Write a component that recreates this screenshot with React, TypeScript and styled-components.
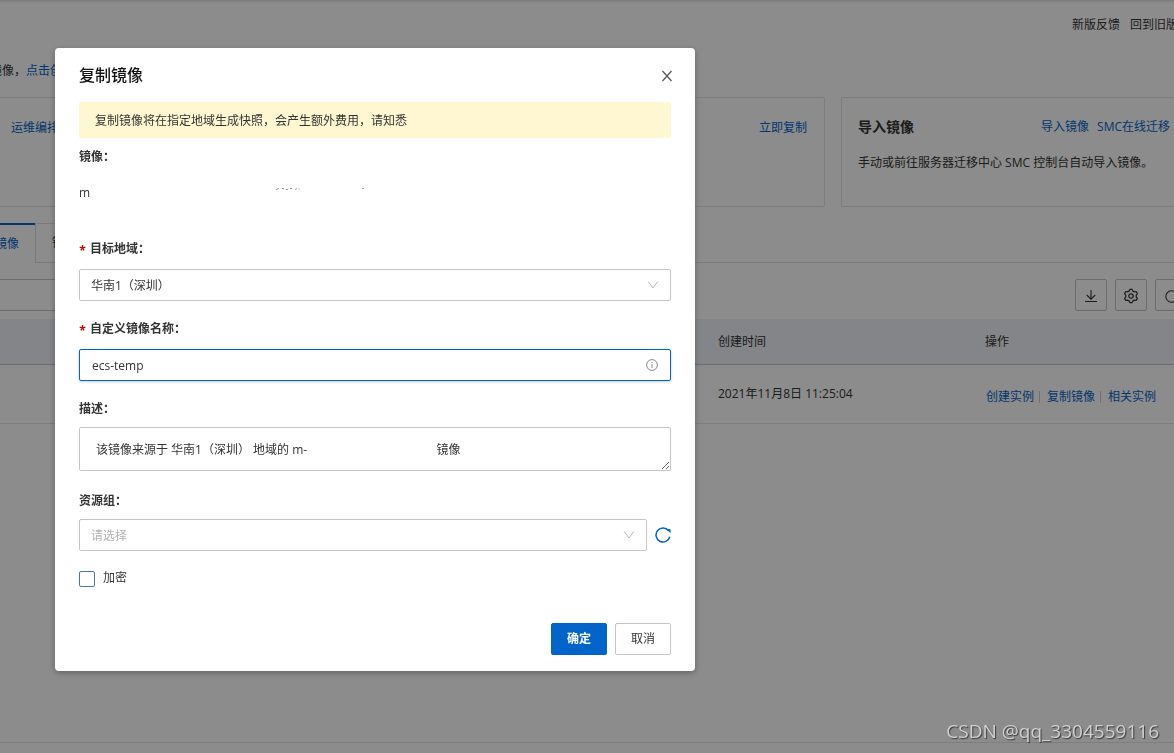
import React from "react";
import styled, { createGlobalStyle, css } from "styled-components";

const GlobalStyle = createGlobalStyle`
  * { box-sizing: border-box; }
  html, body, #root { height: 100%; }
  body {
    margin: 0;
    overflow: hidden;
    background: #fff;
    color: #333;
    font: 12px/18px "Open Sans", "Noto Sans CJK SC", sans-serif;
  }
  button, input, select, textarea { font: inherit; color: inherit; }
`;

const Page = styled.div`
  display: flex;
  flex-direction: column;
  height: 100%;
  min-height: 100vh;
  overflow: hidden;
  white-space: nowrap;
  background: linear-gradient(#dcdcdc, #fff 3px);
`;

const Link = styled.a`
  color: #0064c8;
  text-decoration: none;
`;

const PageHeader = styled.header`
  display: flex;
  justify-content: flex-end;
  gap: 10px;
  margin: 16px -4px 28px 0;
`;

const HeaderLink = styled(Link)`
  color: #333;
`;

const Notice = styled.p`
  margin: 0 0 17px -10px;
`;

const Cards = styled.section`
  display: grid;
  grid-template-columns: repeat(4, 1fr);
  gap: 16px;
  margin: 0 -13px 16px -245px;
`;

const Card = styled.article`
  height: 110px;
  padding: 18px 16px;
  border: 1px solid #e1e3e6;
  border-radius: 2px;
`;

const CardHead = styled.div`
  display: flex;
  gap: 8px;
  align-items: center;
  height: 22px;
`;

const CardTitle = styled.h2`
  margin: 0;
  font-size: 14px;
  line-height: 20px;
  font-weight: 600;
`;

const CardLinks = styled.div`
  display: flex;
  gap: 8px;
  margin-left: auto;
`;

const SoloLinks = styled(CardLinks)`
  padding: 2px 1px 0 0;
`;

const WideLink = styled(Link)`
  min-width: 72px;
`;

const CardText = styled.p`
  margin: 16px 0 0;
`;

const Tabs = styled.nav`
  display: flex;
  height: 40px;
  margin-bottom: 16px;

  &::after {
    content: "";
    flex: 1;
    border-bottom: 1px solid #dcdfe3;
  }
`;

const Tab = styled.button<{ $active?: boolean }>`
  padding: 0 16px;
  background: #fff;
  border: 1px solid #dcdfe3;
  ${(p) =>
    p.$active &&
    css`
      margin-left: -21px;
      color: #0064c8;
      border-width: 2px 0 0;
      border-color: #0064c8;
    `}
`;

const Toolbar = styled.div`
  display: flex;
  gap: 8px;
  height: 32px;
  margin: 0 -13px 8px -4px;
`;

const Search = styled.input`
  width: 320px;
  margin-right: auto;
  border: 1px solid #c0c6cc;
  background: #fff;
`;

const ToolButton = styled.button`
  display: flex;
  align-items: center;
  justify-content: center;
  width: 32px;
  padding: 2px 0 0;
  background: #fff;
  border: 1px solid #c0c6cc;
  border-radius: 2px;
`;

const Table = styled.table`
  width: 100%;
  table-layout: fixed;
  border-collapse: separate;
  border-spacing: 0;
  text-align: left;

  th {
    height: 46px;
    padding: 0 16px;
    background: #eff3f8;
    border-bottom: 1px solid #c0c6cc;
    font-weight: 400;
  }
  td {
    height: 59px;
    padding: 0 16px;
    border-bottom: 1px solid #e1e3e6;
  }
`;

const Column = styled.col<{ $width?: number }>`
  width: ${(p) => (p.$width ? `${p.$width}px` : "auto")};
`;

const RowLinks = styled.div`
  display: flex;
  align-items: center;
  padding: 6px 0 0 1px;

  a + a::before {
    content: "";
    display: inline-block;
    width: 1px;
    height: 12px;
    margin: 0 7px 0 5px;
    background: #c8ccd0;
    vertical-align: -2px;
  }
`;

const PageFooter = styled.footer`
  height: 11px;
  margin-top: auto;
  border-top: 1px solid #e6e6e6;
`;

const Overlay = styled.div`
  position: fixed;
  inset: 0;
  padding: 48px 55px;
  background: rgba(0, 0, 0, 0.45);
`;

const Dialog = styled.form`
  width: 100%;
  max-width: 640px;
  padding: 0 24px 16px;
  background: #fff;
  border-radius: 4px;
  box-shadow: 0 2px 6px rgba(0, 0, 0, 0.3);
`;

const DialogHead = styled.div`
  display: flex;
  align-items: center;
  justify-content: space-between;
  height: 54px;
`;

const DialogTitle = styled.h1`
  margin: 0;
  color: #111;
  font-size: 16px;
  line-height: 24px;
  font-weight: 500;
`;

const IconButton = styled.button`
  display: flex;
  padding: 0;
  background: none;
  border: 0;
`;

const CloseButton = styled(IconButton)`
  margin-right: -2px;
  padding-top: 2px;
`;

const Alert = styled.div`
  padding: 10px 16px 8px;
  background: #fff7d1;
  border-radius: 2px;
  margin-bottom: 9px;
`;

const Item = styled.div`
  margin-bottom: 18px;
`;

const Label = styled.label<{ $gap: number }>`
  display: block;
  height: 20px;
  margin-bottom: ${(p) => p.$gap}px;
  line-height: 20px;
  font-weight: 600;
`;

const Required = styled.span`
  display: inline-block;
  width: 11px;
  padding-right: 4px;
  color: #c80000;
  font-weight: 700;
  line-height: 14px;
  text-align: center;
  vertical-align: -2px;
`;

const Value = styled.output`
  display: flex;
  height: 46px;
  line-height: 36px;
`;

const Residue = styled.svg`
  margin: 12px 0 0 184px;
`;

const Control = styled.div`
  position: relative;
  flex: 1;
`;

const field = css`
  display: block;
  width: 100%;
  height: 32px;
  margin: 0;
  padding: 0 11px;
  background: #fff;
  border: 1px solid #c0c6cc;
  border-radius: 2px;
  outline: none;
`;

const Select = styled.select<{ $empty?: boolean }>`
  ${field}
  padding-top: 2px;
  appearance: none;
  color: ${(p) => (p.$empty ? "#b3b3b3" : "#333")};
`;

const Input = styled.input`
  ${field}
  padding: 0 32px 0 12px;
  border-color: #0064c8;
  box-shadow: 0 1px 3px rgba(0, 0, 0, 0.2);
`;

const TextArea = styled.textarea`
  ${field}
  height: 44px;
  margin-bottom: 20px;
  padding: 13px 16px 11px;
  overflow: hidden;
  resize: vertical;
`;

const FieldIcon = styled.svg`
  position: absolute;
  top: 50%;
  right: 12px;
  margin-top: -6px;
  pointer-events: none;
`;

const FieldRow = styled.div`
  display: flex;
  align-items: center;
  gap: 8px;
`;

const CheckRow = styled.label`
  display: flex;
  align-items: flex-end;
  gap: 8px;
`;

const Checkbox = styled.input`
  appearance: none;
  width: 16px;
  height: 16px;
  margin: 0;
  background: #fff;
  border: 1px solid #4b76a8;
  border-radius: 2px;
`;

const DialogFooter = styled.div`
  display: flex;
  justify-content: flex-end;
  gap: 8px;
  margin-top: 36px;
`;

const Button = styled.button<{ $primary?: boolean }>`
  width: 56px;
  height: 32px;
  padding: 0;
  border: 1px solid ${(p) => (p.$primary ? "#0064c8" : "#c0c6cc")};
  border-radius: 2px;
  background: ${(p) => (p.$primary ? "#0064c8" : "#fff")};
  color: ${(p) => (p.$primary ? "#fff" : "#333")};
  font-weight: ${(p) => (p.$primary ? 600 : 400)};
`;

const Watermark = styled.div`
  position: fixed;
  right: 15px;
  bottom: 8px;
  color: #d0d0d0;
  font-size: 19px;
  line-height: 28px;
  text-shadow: 1px 1px 1px rgba(0, 0, 0, 0.6);
`;

const Chevron = () => (
  <FieldIcon width="12" height="12" viewBox="0 0 12 12" fill="none" stroke="#b8b8b8">
    <path d="M1.2 2.5 6 9 10.8 2.5" />
  </FieldIcon>
);

const RefreshIcon = ({ color, size, width = 1.5 }: { color: string; size: number; width?: number }) => (
  <svg width={size} height={size} viewBox="0 0 16 16" fill="none" stroke={color} strokeWidth={width}>
    <path d="M13.6 3.8A7 7 0 1 0 14.8 9.8" />
    <path d="M12.2 2.6h3v2.8z" fill={color} strokeWidth="0.8" />
  </svg>
);

const DownloadIcon = () => (
  <svg width="14" height="14" viewBox="0 0 14 14" fill="none" stroke="#333" strokeWidth="1.1">
    <path d="M7 1v9M2.8 6 7 10.2 11.2 6M1 12.5h12" />
  </svg>
);

const GearIcon = () => (
  <svg width="16" height="16" viewBox="0 0 16 16" fill="none" stroke="#333" strokeWidth="1.2" strokeLinejoin="round">
    <path d="M6.8 1.4h2.4l.6 1.7 1.5.8 1.9-.4 1.2 2.100-1.200 1.500v1.800l1.200 1.500-1.200 2.100-1.900-.4-1.500.8-.6 1.700H6.800l-.6-1.700-1.500-.8-1.900.4-1.200-2.100 1.200-1.500V7.100L1.600 5.600l1.200-2.100 1.900.4 1.500-.8z" />
    <circle cx="8" cy="8" r="2.2" />
  </svg>
);

const description = "该镜像来源于 华南1（深圳） 地域的 m-" + "\u3000".repeat(10) + "\u00a0\u00a0\u00a0镜像";

export default function App() {
  return (
    <>
      <GlobalStyle />
      <Page>
        <PageHeader>
          <HeaderLink href="#feedback">新版反馈</HeaderLink>
          <HeaderLink href="#old">回到旧版</HeaderLink>
        </PageHeader>
        <Notice>
          镜像，<Link href="#create">点击创建</Link>
        </Notice>
        <Cards>
          <Card>
            <CardHead>
              <SoloLinks>
                <WideLink href="#oos">运维编排</WideLink>
              </SoloLinks>
            </CardHead>
          </Card>
          <Card />
          <Card>
            <CardHead>
              <SoloLinks>
                <Link href="#copy">立即复制</Link>
              </SoloLinks>
            </CardHead>
          </Card>
          <Card>
            <CardHead>
              <CardTitle>导入镜像</CardTitle>
              <CardLinks>
                <Link href="#import">导入镜像</Link>
                <Link href="#smc">SMC在线迁移</Link>
              </CardLinks>
            </CardHead>
            <CardText>手动或前往服务器迁移中心 SMC 控制台自动导入镜像。</CardText>
          </Card>
        </Cards>
        <Tabs>
          <Tab $active>镜像</Tab>
          <Tab>镜像</Tab>
        </Tabs>
        <Toolbar>
          <Search aria-label="搜索" />
          <ToolButton aria-label="下载">
            <DownloadIcon />
          </ToolButton>
          <ToolButton aria-label="设置">
            <GearIcon />
          </ToolButton>
          <ToolButton aria-label="刷新">
            <RefreshIcon color="#333" size={13} width={1.3} />
          </ToolButton>
        </Toolbar>
        <Table>
          <colgroup>
            <Column $width={702} />
            <Column $width={267} />
            <Column />
          </colgroup>
          <thead>
            <tr>
              <th />
              <th>创建时间</th>
              <th>操作</th>
            </tr>
          </thead>
          <tbody>
            <tr>
              <td />
              <td>2021年11月8日 11:25:04</td>
              <td>
                <RowLinks>
                  <Link href="#instance">创建实例</Link>
                  <Link href="#copy">复制镜像</Link>
                  <Link href="#related">相关实例</Link>
                </RowLinks>
              </td>
            </tr>
          </tbody>
        </Table>
        <PageFooter />
      </Page>
      <Overlay>
        <Dialog role="dialog" aria-labelledby="dialog-title">
          <DialogHead>
            <DialogTitle id="dialog-title">复制镜像</DialogTitle>
            <CloseButton type="button" aria-label="关闭">
              <svg width="12" height="12" viewBox="0 0 12 12" stroke="#555" strokeWidth="1.2">
                <path d="M1.5 1l9 10M10.5 1l-9 10" />
              </svg>
            </CloseButton>
          </DialogHead>
          <Alert>复制镜像将在指定地域生成快照，会产生额外费用，请知悉</Alert>
          <Item>
            <Label $gap={8} htmlFor="image">镜像：</Label>
            <Value id="image">
              m
              <Residue width="96" height="4" stroke="#999" strokeWidth="1">
                <path d="M2 2.5 5 1.5M8 1.5h2M12 2.5h2M16 1.5h2M21 2.5l2-1M25 1.5v1M88 1.5h2" />
              </Residue>
            </Value>
          </Item>
          <Item>
            <Label $gap={10} htmlFor="region">
              <Required>*</Required>目标地域：
            </Label>
            <Control>
              <Select id="region">
                <option>华南1（深圳）</option>
              </Select>
              <Chevron />
            </Control>
          </Item>
          <Item>
            <Label $gap={10} htmlFor="name">
              <Required>*</Required>自定义镜像名称：
            </Label>
            <Control>
              <Input id="name" defaultValue="ecs-temp" />
              <FieldIcon width="14" height="12" viewBox="0 0 14 12" fill="none" stroke="#888">
                <circle cx="7" cy="6" r="5.4" />
                <path d="M7 5v4M7 3v1" />
              </FieldIcon>
            </Control>
          </Item>
          <Item>
            <Label $gap={8} htmlFor="description">描述：</Label>
            <TextArea id="description" defaultValue={description} />
          </Item>
          <Item>
            <Label $gap={8} htmlFor="group">资源组：</Label>
            <FieldRow>
              <Control>
                <Select id="group" $empty>
                  <option>请选择</option>
                </Select>
                <Chevron />
              </Control>
              <IconButton type="button" aria-label="刷新资源组">
                <RefreshIcon color="#0064c8" size={16} />
              </IconButton>
            </FieldRow>
          </Item>
          <CheckRow>
            <Checkbox type="checkbox" />
            加密
          </CheckRow>
          <DialogFooter>
            <Button type="submit" $primary>确定</Button>
            <Button type="button">取消</Button>
          </DialogFooter>
        </Dialog>
      </Overlay>
      <Watermark>CSDN @qq_3304559116</Watermark>
    </>
  );
}
